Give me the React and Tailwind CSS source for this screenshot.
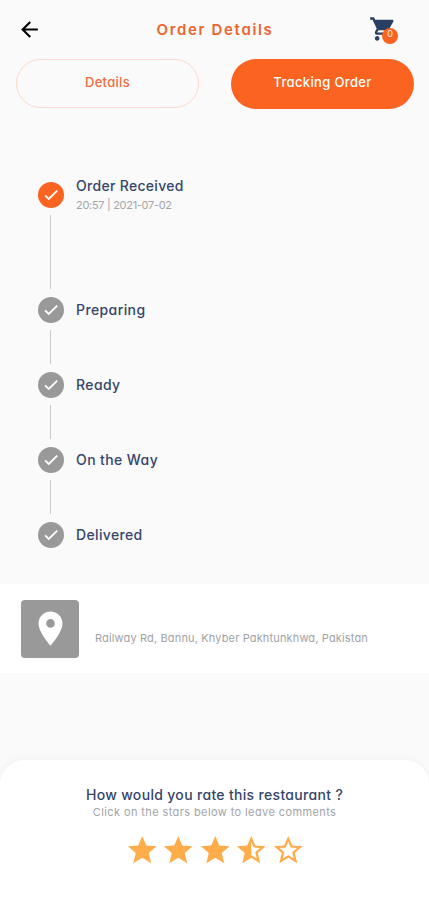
import {
  MdArrowBack,
  MdLocationOn,
  MdShoppingCart,
  MdStar,
  MdStarBorder,
  MdStarHalf,
} from 'react-icons/md';

const steps = [
  { label: 'Order Received', time: '20:57 | 2021-07-02', done: true, row: 'h-[115px]', tracking: 'tracking-[0.3px]' },
  { label: 'Preparing', row: 'h-[75px]', tracking: 'tracking-[0.4px]' },
  { label: 'Ready', row: 'h-[75px]', tracking: 'tracking-[0.4px]' },
  { label: 'On the Way', row: 'h-[75px]', tracking: 'tracking-[0.4px]' },
  { label: 'Delivered', row: 'h-[26px]', tracking: 'tracking-[0.35px]' },
];

const stars = [MdStar, MdStar, MdStar, MdStarHalf, MdStarBorder];

const Header = () => (
  <header className="flex h-[58.5px] items-center justify-between pl-[17px] pr-[32px]">
    <button type="button" aria-label="Back">
      <MdArrowBack className="size-[25px] text-black" />
    </button>
    <h1 className="pl-[19px] pt-[2px] text-[15px] font-semibold tracking-[1.65px] text-[#e9642f]">Order Details</h1>
    <button type="button" aria-label="Cart" className="relative">
      <MdShoppingCart className="size-[28px] text-[#263f63]" />
      <span className="absolute -right-px top-[13px] flex size-4 items-start justify-center rounded-full bg-[#fa6320] text-[9px] leading-[12px] text-white/90">
        0
      </span>
    </button>
  </header>
);

const CheckIcon = () => (
  <svg viewBox="0 0 24 24" className="size-[18px]" fill="none" stroke="white" strokeWidth="2.4">
    <path d="M4.1 12.6 9 17.3 20.3 6.3" />
  </svg>
);

const Step = ({ step, last }) => (
  <li className={`flex ${step.row}`}>
    <div className="flex w-[26px] flex-col items-center">
      <div
        className={`flex size-[25.5px] shrink-0 items-center justify-center rounded-full ${
          step.done ? 'bg-[#fa6320]' : 'bg-[#999999]'
        }`}
      >
        <CheckIcon />
      </div>
      {!last && <div className="mb-2 mr-px mt-[7.5px] w-px flex-1 bg-[#c9c9c9]" />}
    </div>
    <div className={`ml-3 whitespace-nowrap ${step.time ? '-mt-[6px]' : 'mt-[2.5px]'}`}>
      <p className={`text-[14px] font-medium leading-5 text-[#36466a] ${step.tracking}`}>{step.label}</p>
      {step.time && (
        <p className="text-[11px] leading-[18px] tracking-[-0.3px] text-[#a5a5a8]">{step.time}</p>
      )}
    </div>
  </li>
);

const App = () => {
  return (
    <div className="flex h-[900px] w-full flex-col overflow-hidden bg-[#fafafa] font-['Inter',sans-serif] [font-feature-settings:'cv11']">
      <Header />

      <div className="flex items-start justify-between pl-4 pr-[15px]">
        <button
          type="button"
          className="h-[49px] w-[183px] rounded-full border border-[#fbd9ca] text-[13px] font-medium tracking-[0.3px] text-[#ee6c3b]"
        >
          Details
        </button>
        <button
          type="button"
          className="h-[50px] w-[183px] rounded-full bg-[#fa6320] pb-px text-[13px] font-medium tracking-[0.35px] text-white"
        >
          Tracking Order
        </button>
      </div>

      <ul className="mt-[73.5px] pl-[38px]">
        {steps.map((step, index) => (
          <Step key={step.label} step={step} last={index === steps.length - 1} />
        ))}
      </ul>

      <div className="mt-9 flex h-[89px] items-center bg-white pl-[21px]">
        <div className="flex size-[58px] items-center justify-center rounded-[4px] bg-[#999999]">
          <MdLocationOn className="size-[41px] text-white" />
        </div>
        <p className="ml-4 mt-[20px] whitespace-nowrap text-[11px] tracking-[0.15px] text-[#9fa2a4]">
          Railway Rd, Bannu, Khyber Pakhtunkhwa, Pakistan
        </p>
      </div>

      <section className="mt-auto flex h-[140px] flex-col items-center rounded-t-[24px] bg-white pt-[26px] shadow-[0_-2px_6px_rgba(0,0,0,0.03)]">
        <h2 className="text-[14px] font-medium leading-[18px] tracking-[0.32px] text-[#36466a]">
          How would you rate this restaurant ?
        </h2>
        <p className="text-[11px] leading-4 tracking-[0.4px] text-[#a2a5a8]">
          Click on the stars below to leave comments
        </p>
        <div className="mt-[13px] flex gap-[2px] pl-px">
          {stars.map((Star, index) => (
            <Star key={index} className="size-[34.5px] text-[#ffac4b]" />
          ))}
        </div>
      </section>
    </div>
  );
};

export default App;
